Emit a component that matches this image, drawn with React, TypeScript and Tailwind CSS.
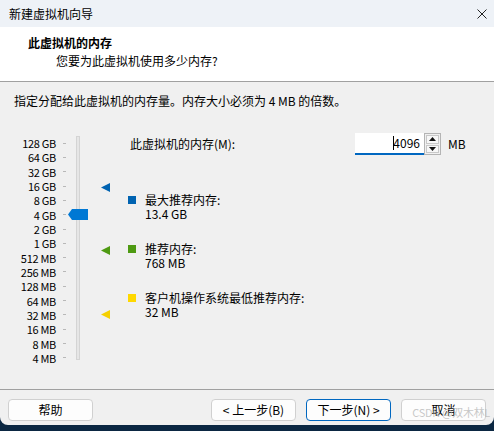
import React from "react";

const labels = [
  "128 GB", "64 GB", "32 GB", "16 GB", "8 GB", "4 GB", "2 GB", "1 GB",
  "512 MB", "256 MB", "128 MB", "64 MB", "32 MB", "16 MB", "8 MB", "4 MB",
];

function Tri({ color, top }: { color: string; top: number }) {
  return (
    <svg
      className="absolute left-[101px]"
      style={{ top: top - 4 }}
      width="10"
      height="9"
      viewBox="0 0 10 9"
    >
      <polygon points="0,4.5 9,0 9,9" fill={color} />
    </svg>
  );
}

function Btn({ children, primary }: { children: React.ReactNode; primary?: boolean }) {
  return (
    <div
      className={
        "w-[85px] h-[22px] flex items-center justify-center rounded-[4px] bg-[#fdfdfd] text-[12px] text-black " +
        (primary ? "border border-[#0067c0]" : "border border-[#d0d0d0]")
      }
    >
      {children}
    </div>
  );
}

export default function App() {
  return (
    <div
      className="w-[494px] h-[431px] bg-[#0b2742] overflow-hidden relative"
      style={{ fontFamily: '"Noto Sans CJK SC", "Noto Sans", sans-serif' }}
    >
      <div className="h-[425px] flex flex-col bg-[#f0f0f0] rounded-b-[8px] overflow-hidden text-black">
        {/* Title bar */}
        <div className="h-[27px] shrink-0 bg-[#eef2f7] flex items-center pl-[9px] pr-[7px]">
          <span className="text-[12px] leading-[16px]">新建虚拟机向导</span>
          <svg className="ml-auto" width="10" height="10" viewBox="0 0 10 10">
            <path d="M0.5 0.5 L9.5 9.5 M9.5 0.5 L0.5 9.5" stroke="#222" strokeWidth="1" />
          </svg>
        </div>
        {/* Header */}
        <div className="h-[55px] shrink-0 bg-white pl-[28px] pt-[8px] border-b border-[#a0a0a0]">
          <div className="text-[12px] leading-[16px] font-bold">此虚拟机的内存</div>
          <div className="text-[12px] leading-[16px] mt-[2px] pl-[28px]">您要为此虚拟机使用多少内存?</div>
        </div>
        {/* Body */}
        <div className="h-[307px] shrink-0 flex flex-col pl-[14px] pt-[11px]">
          <div className="text-[12px] leading-[16px]">指定分配给此虚拟机的内存量。内存大小必须为 4 MB 的倍数。</div>
          <div className="flex mt-[24px] -ml-[14px]">
            {/* Slider */}
            <div className="relative w-[128px] h-[232px] pt-[3px] flex">
              <div className="w-[56px] flex flex-col items-end">
                {labels.map((l) => (
                  <div key={l} className="h-[14.4px] flex items-center text-[11px] leading-[14px] tracking-[-0.3px] whitespace-nowrap">
                    {l}
                  </div>
                ))}
              </div>
              <div className="w-[3px] ml-[7px] flex flex-col">
                {labels.map((l) => (
                  <div key={l} className="h-[14.4px] flex items-center">
                    <div className="w-[3px] h-[1px] bg-[#b8b8b8]" />
                  </div>
                ))}
              </div>
              <div className="ml-[10px] w-[4px] h-[224px] bg-[#e6e6e6] border border-[#d4d4d4]" />
              {/* thumb */}
              <svg className="absolute left-[68px] top-[76px]" width="20" height="11" viewBox="0 0 20 11">
                <polygon points="0,5.5 4,0 20,0 20,11 4,11" fill="#0078d4" />
              </svg>
              <Tri color="#0063b1" top={54} />
              <Tri color="#4e9a12" top={117} />
              <Tri color="#f5d000" top={181} />
            </div>
            {/* Right */}
            <div className="flex flex-col">
              <div className="flex items-center h-[22px]">
                <div className="w-[227px] pl-[2px] text-[12px] leading-[16px]">此虚拟机的内存(M):</div>
                <div className="w-[69px] h-[22px] bg-white border-b-2 border-[#0067c0] flex items-center justify-end pr-[4px] text-[12px] relative">
                  <span className="w-[1px] h-[14px] bg-black mr-[-1px]" />
                  <span>4096</span>
                </div>
                <div className="w-[17px] h-[22px] border border-[#b4b4b4] bg-[#f0f0f0] flex flex-col p-[1px] gap-[1px]">
                  <div className="flex-1 border border-[#c8c8c8] bg-[#f7f7f7] flex items-center justify-center">
                    <svg width="7" height="4" viewBox="0 0 7 4"><polygon points="3.5,0 7,4 0,4" fill="#111" /></svg>
                  </div>
                  <div className="flex-1 border border-[#c8c8c8] bg-[#f7f7f7] flex items-center justify-center">
                    <svg width="7" height="4" viewBox="0 0 7 4"><polygon points="0,0 7,0 3.5,4" fill="#111" /></svg>
                  </div>
                </div>
                <div className="ml-[7px] text-[12px]">MB</div>
              </div>
              {[
                { c: "bg-[#0063b1]", t: "最大推荐内存:", v: "13.4 GB", mt: "mt-[38px]" },
                { c: "bg-[#4e9a12]", t: "推荐内存:", v: "768 MB", mt: "mt-[21px]" },
                { c: "bg-[#ffd800]", t: "客户机操作系统最低推荐内存:", v: "32 MB", mt: "mt-[21px]" },
              ].map((it) => (
                <div key={it.t} className={"flex " + it.mt}>
                  <div className={"w-[8px] h-[8px] mt-[3px] " + it.c} />
                  <div className="ml-[9px] text-[12px] leading-[14px]">
                    <div>{it.t}</div>
                    <div>{it.v}</div>
                  </div>
                </div>
              ))}
            </div>
          </div>
        </div>
        {/* Footer */}
        <div className="flex-1 border-t border-[#a0a0a0] pt-[9px] px-[8px] flex items-start">
          <Btn>帮助</Btn>
          <div className="ml-auto flex gap-[10px]">
            <Btn>&lt; 上一步(B)</Btn>
            <Btn primary>下一步(N) &gt;</Btn>
            <Btn>取消</Btn>
          </div>
        </div>
      </div>
      <div className="absolute right-[4px] bottom-[12px] text-[11px] text-[#b0b0b0]/70 leading-[13px] tracking-[-0.3px]">CSDN @双木林L</div>
    </div>
  );
}
